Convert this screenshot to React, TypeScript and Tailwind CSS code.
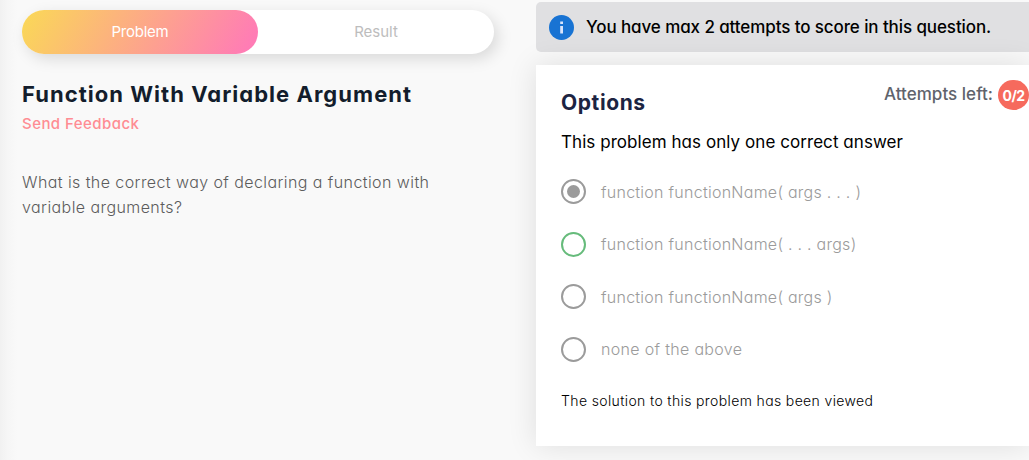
const options = [
  { label: "function functionName( args . . . )", ring: "border-[#9b9b9b]", spacing: "tracking-[0.26px]", selected: true },
  { label: "function functionName( . . . args)", ring: "border-[#66bb7b]", spacing: "tracking-[0.26px]", selected: false },
  { label: "function functionName( args )", ring: "border-[#9b9b9b]", spacing: "tracking-[0.26px]", selected: false },
  { label: "none of the above", ring: "border-[#9b9b9b]", spacing: "tracking-[0.32px]", selected: false },
];

function Problem() {
  return (
    <section className="h-full w-[524px] shrink-0 bg-[linear-gradient(90deg,#f1f1f1_0px,#f6f6f6_8px,#f9f9f9_18px)] pl-[22px] pt-[10px]">
      <div className="flex h-11 w-[472px] rounded-full bg-white text-[15px] leading-[44px] shadow-[4px_5px_15px_rgba(0,0,0,0.13)]">
        <div className="w-[236px] rounded-full bg-[linear-gradient(120deg,#fad956_0%,#ff7cb5_95%)] text-center tracking-[-0.25px] text-white">Problem</div>
        <div className="w-[236px] text-center text-[#bdbdbd]">Result</div>
      </div>
      <h1 className="mt-[26px] text-[22px] leading-7 font-[650] tracking-[1.03px] text-[#131d2c]">Function With Variable Argument</h1>
      <div className="mt-[6px] text-[15px] leading-5 font-medium tracking-[0.45px] text-[#ff8c93]">Send Feedback</div>
      <p className="mt-9 text-[16px] leading-[25px] font-[350] tracking-[0.42px] text-[#5c5c5c]">
        What is the correct way of declaring a function with
        <br />
        variable arguments?
      </p>
    </section>
  );
}

function Answers() {
  return (
    <section className="flex min-w-0 flex-1 flex-col bg-[#f9f9f9] pl-3 pt-[2px]">
      <div className="flex h-[50px] shrink-0 items-center rounded-l-[5px] bg-[#e0e0e2] pl-[13px]">
        <svg className="size-[25px] shrink-0" viewBox="0 0 25 25">
          <circle cx="12.5" cy="12.5" r="12.5" fill="#1873d3" />
          <path d="M11.2 6.4h2.8v2.5h-2.8zM11.2 10.9h2.8v7.7h-2.8z" fill="#d9e4fb" />
        </svg>
        <p className="ml-3 text-[17px] leading-6 font-medium tracking-[-0.1px] whitespace-nowrap text-black">You have max 2 attempts to score in this question.</p>
      </div>
      <div className="mt-[13px] h-[381px] shrink-0 bg-white pl-[25px] pt-[14px] shadow-[0_0_28px_rgba(0,0,0,0.11)]">
        <div className="flex h-8 justify-between">
          <h2 className="mt-[10px] text-[21px] leading-7 font-[650] tracking-[0.6px] text-[#1c2442]">Options</h2>
          <div className="flex items-center">
            <span className="text-[17px] font-medium tracking-[0.03px] whitespace-nowrap text-[#60636c]">Attempts left:</span>
            <span className="ml-[5px] flex h-[30px] w-[31px] items-center justify-center rounded-full bg-[#f66a5d] text-[14px] font-bold tracking-[-0.6px] text-white">0/2</span>
          </div>
        </div>
        <p className="mt-[19px] text-[17px] leading-6 tracking-[0.06px] text-black">This problem has only one correct answer</p>
        <div className="mt-[25px] flex flex-col gap-[27.5px]">
          {options.map((option) => (
            <div key={option.label} className="flex h-[25px] items-center">
              <span className={`flex size-[25px] items-center justify-center rounded-full border-2 ${option.ring}`}>
                {option.selected && <span className="size-[13px] rounded-full bg-[#9b9b9b]" />}
              </span>
              <span className={`ml-[15px] text-[16px] leading-6 font-light whitespace-nowrap text-[#9b9b9b] ${option.spacing}`}>{option.label}</span>
            </div>
          ))}
        </div>
        <p className="mt-[29px] text-[14px] leading-5 font-[350] tracking-[0.37px] text-black">The solution to this problem has been viewed</p>
      </div>
    </section>
  );
}

export default function App() {
  return (
    <main className="flex h-[460px] w-[1029px] overflow-hidden font-['Inter',sans-serif] [font-feature-settings:'cv11']">
      <Problem />
      <Answers />
    </main>
  );
}
